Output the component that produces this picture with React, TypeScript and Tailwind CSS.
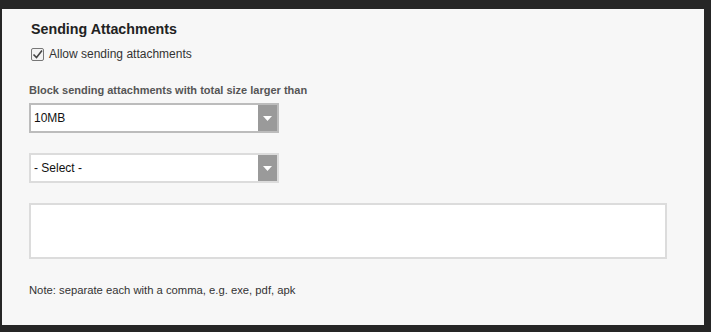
import React, { useState } from "react";

const sizeOptions = ["5MB", "10MB", "20MB", "25MB", "50MB"];

const SelectBox = ({ value, options, dark }: { value: string; options: string[]; dark?: boolean }) => {
  const [val, setVal] = useState(value);
  return (
    <div
      className={`relative w-[250px] h-[30px] bg-white border-2 ${
        dark ? "border-[#bcbcbc]" : "border-[#dcdcdc]"
      }`}
    >
      <select
        value={val}
        onChange={(e) => setVal(e.target.value)}
        className="appearance-none w-full h-full bg-transparent pl-[3px] pr-6 text-[12px] text-[#111] outline-none"
      >
        {options.map((o) => (
          <option key={o}>{o}</option>
        ))}
      </select>
      <div className="pointer-events-none absolute right-0 top-0 h-full w-[19px] bg-[#9a9a9a] flex items-center justify-center">
        <svg width="9" height="5" viewBox="0 0 9 5">
          <polygon points="0,0 9,0 4.5,5" fill="#fff" />
        </svg>
      </div>
    </div>
  );
};

export default function App() {
  const [allow, setAllow] = useState(true);

  return (
    <div className="w-[711px] h-[332px] bg-[#262626] pt-[9px] pl-[2px] pr-[7px] pb-[7px] font-['Liberation_Sans',Arial,sans-serif]">
      <div className="h-full bg-[#f7f7f7] pl-[27px] pt-[12px]">
        <h2 className="text-[14.25px] font-bold text-[#222] leading-[16px] pl-[2px]">Sending Attachments</h2>

        <label className="mt-[10px] flex items-center gap-[5px] pl-[2px] cursor-pointer">
          <span
            onClick={() => setAllow(!allow)}
            className="w-[13px] h-[13px] border border-[#777] rounded-[2px] bg-[#f3f3f3] flex items-center justify-center"
          >
            {allow && (
              <svg width="11" height="11" viewBox="0 0 11 11">
                <path d="M1.5 5.5 L4.5 8.5 L10 1.5" fill="none" stroke="#444" strokeWidth="1.6" />
              </svg>
            )}
          </span>
          <span className="text-[12px] text-[#333] leading-[14px]">Allow sending attachments</span>
        </label>

        <p className="mt-[23px] text-[11px] font-bold text-[#555] leading-[13px]">
          Block sending attachments with total size larger than
        </p>

        <div className="mt-[6px]">
          <SelectBox value="10MB" options={sizeOptions} dark />
        </div>

        <div className="mt-[20px]">
          <SelectBox value="- Select -" options={["- Select -", "Block", "Allow"]} />
        </div>

        <textarea className="mt-[20px] block w-[638px] h-[56px] bg-white border-2 border-[#dcdcdc] resize-none outline-none text-[12px] p-1" />

        <p className="mt-[24px] text-[11.25px] text-[#333] leading-[14px]">
          Note: separate each with a comma, e.g. exe, pdf, apk
        </p>
      </div>
    </div>
  );
}
